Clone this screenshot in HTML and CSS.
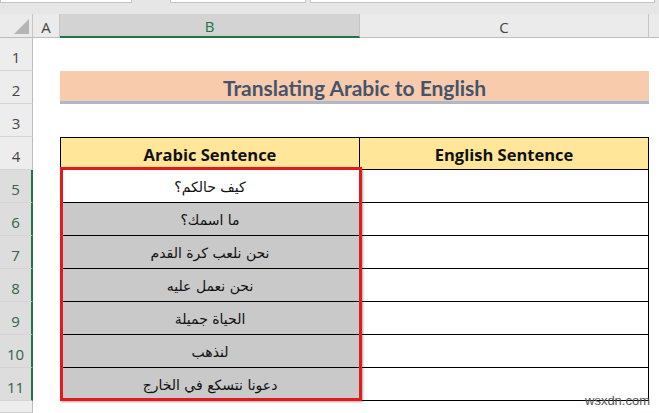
FILE: index.html
```html
<!DOCTYPE html>
<html lang="en">
<head>
  <meta charset="UTF-8" />
  <title>Translating Arabic to English</title>
  <link rel="stylesheet" href="styles.css">
</head>
<body>
  <div class="screen">
    <div class="topbar">
      <div class="box box1"></div>
      <div class="box box2"></div>
      <div class="box box3"></div>
    </div>

    <div class="sheet">
      <!-- Arabic sentences B5:B11, selected with a red outline -->
      <div class="arabic-block">
        <div class="cell colb ar" dir="rtl">كيف حالكم؟</div>
        <div class="cell colb ar gray" dir="rtl">ما اسمك؟</div>
        <div class="cell colb ar gray" dir="rtl">نحن نلعب كرة القدم</div>
        <div class="cell colb ar gray" dir="rtl">نحن نعمل عليه</div>
        <div class="cell colb ar gray" dir="rtl">الحياة جميلة</div>
        <div class="cell colb ar gray" dir="rtl">لنذهب</div>
        <div class="cell colb ar gray" dir="rtl">دعونا نتسكع في الخارج</div>
      </div>

      <!-- column headers -->
      <div class="corner"><div class="tri"></div></div>
      <div class="ch">A</div>
      <div class="ch sel">B</div>
      <div class="ch">C</div>
      <div class="ch last"></div>

      <!-- row 1 -->
      <div class="rh">1</div>
      <div></div><div></div><div></div><div></div>

      <!-- row 2 -->
      <div class="rh">2</div>
      <div></div>
      <div class="title">Translating Arabic to English</div>
      <div></div>

      <!-- row 3 -->
      <div class="rh">3</div>
      <div></div><div></div><div></div><div></div>

      <!-- row 4 -->
      <div class="rh">4</div>
      <div></div>
      <div class="cell first th colb">Arabic Sentence</div>
      <div class="cell first th">English Sentence</div>
      <div></div>

      <!-- rows 5-11 (column B comes from the block above) -->
      <div class="rh sel">5</div>
      <div></div><div class="cell"></div><div></div>
      <div class="rh sel">6</div>
      <div></div><div class="cell"></div><div></div>
      <div class="rh sel">7</div>
      <div></div><div class="cell"></div><div></div>
      <div class="rh sel">8</div>
      <div></div><div class="cell"></div><div></div>
      <div class="rh sel">9</div>
      <div></div><div class="cell"></div><div></div>
      <div class="rh sel">10</div>
      <div></div><div class="cell"></div><div></div>
      <div class="rh sel">11</div>
      <div></div><div class="cell"></div><div></div>

      <!-- row 12 (cut off) -->
      <div class="rh"></div>
      <div></div><div></div><div></div><div></div>
    </div>

    <div class="wm">wsxdn.com</div>
  </div>
</body>
</html>
```

FILE: styles.css
```css
* {
  box-sizing: border-box;
}
body {
  margin: 0;
  font-family: Lato, "Open Sans", sans-serif;
  background-color: #fff;
  overflow: hidden;
}
.screen {
  position: relative;
  width: 659px;
  height: 413px;
  overflow: hidden;
}

/* formula bar strip */
.topbar {
  height: 14px;
  background-color: #e6e6e6;
  display: flex;
  align-items: flex-start;
}
.box {
  height: 3px;
  background-color: #fff;
  border: 1px solid #c4c4c4;
  border-top: none;
}
.box1 { width: 132px; }
.box2 { width: 136px; margin-left: 38px; }
.box3 { width: 345px; margin-left: 4px; }

/* sheet grid */
.sheet {
  display: grid;
  grid-template-columns: 33px 27px 300px 289px 10px;
  grid-template-rows: 24px repeat(11, 33px) 12px;
}

.corner {
  background-color: #ebebeb;
  border-right: 1px solid #c6c6c6;
  border-bottom: 1px solid #bdbdbd;
  display: flex;
  justify-content: flex-end;
  align-items: flex-end;
  padding: 0 3px 3px 0;
}
.tri {
  width: 15px;
  height: 15px;
  background-color: #b5b5b5;
  clip-path: polygon(100% 0, 100% 100%, 0 100%);
}

.ch {
  background-color: #ebebeb;
  border-right: 1px solid #c6c6c6;
  border-bottom: 1px solid #bdbdbd;
  display: flex;
  align-items: center;
  justify-content: center;
  font-family: "Open Sans", sans-serif;
  font-size: 15px;
  color: #444;
  padding-top: 2px;
}
.ch.sel {
  background-color: #d3d3d3;
  color: #217346;
  border-bottom: 2px solid #217346;
}
.ch.last {
  border-right: none;
}

.rh {
  background-color: #ededed;
  border-right: 1px solid #bdbdbd;
  border-bottom: 1px solid #d4d4d4;
  display: flex;
  align-items: flex-end;
  justify-content: center;
  font-family: "Open Sans", sans-serif;
  font-size: 15px;
  line-height: 1;
  color: #444;
  padding-bottom: 5px;
}
.rh.sel {
  background-color: #dddddd;
  color: #2e6647;
  border-right: 2px solid #217346;
}

/* merged title */
.title {
  grid-column: span 2;
  background-color: #f8cbad;
  border-bottom: 3px solid #acb9ca;
  color: #44546a;
  font-weight: bold;
  font-size: 21px;
  display: flex;
  align-items: center;
  justify-content: center;
  padding-top: 2px;
}

/* data table */
.cell {
  border-right: 1px solid #000;
  border-bottom: 1px solid #000;
  display: flex;
  align-items: center;
  justify-content: center;
  padding-top: 2px;
}
.cell.first {
  border-top: 1px solid #000;
}
.cell.colb {
  border-left: 1px solid #000;
}
.th {
  background-color: #ffe699;
  font-family: "Open Sans", sans-serif;
  font-weight: bold;
  font-size: 16.5px;
  color: #111;
}

.arabic-block {
  grid-column: 3;
  grid-row: 6 / 13;
  display: flex;
  flex-direction: column;
  position: relative;
}
.arabic-block .cell {
  flex: 1;
}
.arabic-block::after {
  content: "";
  position: absolute;
  top: -3px;
  left: 0;
  right: -2px;
  bottom: 0;
  border: 3px solid #e11b1b;
  box-shadow: 1px 1px 2px rgba(0,0,0,0.35);
  z-index: 2;
}
.ar {
  font-family: "DejaVu Sans", sans-serif;
  font-size: 14px;
  color: #111;
}
.gray {
  background-color: #c9c9c9;
}

.wm {
  position: absolute;
  left: 585px;
  top: 394px;
  font-family: "Liberation Sans", sans-serif;
  font-size: 13px;
  line-height: 13px;
  color: #555;
}
```
